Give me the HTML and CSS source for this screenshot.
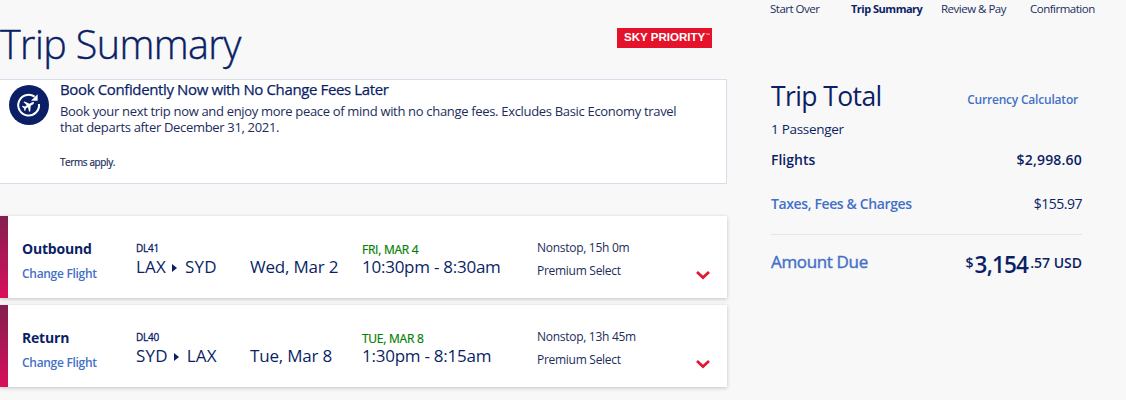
FILE: index.html
```html
<!DOCTYPE html>
<html lang="en">
<head>
    <meta charset="UTF-8">
    <title>Trip Summary</title>
    <link rel="stylesheet" href="styles.css">
</head>
<body>
    <div class="page">
        <main class="trip">
            <div class="trip-header">
                <h1 class="trip-title">Trip Summary</h1>
                <div class="sky-priority"><div class="sky-label"><span class="sky-text">SKY PRIORITY</span><span class="tm">™</span></div></div>
            </div>

            <div class="banner">
                <svg class="banner-icon" width="40" height="40" viewBox="0 0 40 40">
                    <circle cx="20" cy="20" r="20" fill="#0b1f66"/>
                    <path d="M25.6 11.6A10.4 10.4 0 1 0 30 19" fill="none" stroke="#fff" stroke-width="2"/>
                    <path d="M28.6 9.2V15.8H22Z" fill="#fff"/>
                    <g transform="translate(19.6 20.6) rotate(60) scale(.88)">
                        <path d="M0-7C1-7 1.3-5.8 1.3-4.8V-2L6.4 1.6V3.1L1.3 1.5V4.4L3 5.8V7L0 6.2L-3 7V5.8L-1.3 4.4V1.5L-6.4 3.1V1.6L-1.3-2V-4.8C-1.3-5.8-1-7 0-7Z" fill="#fff"/>
                    </g>
                </svg>
                <div class="banner-text">
                    <h2 class="banner-title">Book Confidently Now with No Change Fees Later</h2>
                    <p class="banner-copy">Book your next trip now and enjoy more peace of mind with no change fees. Excludes Basic Economy travel<br>that departs after December 31, 2021.</p>
                    <p class="banner-terms">Terms apply.</p>
                </div>
            </div>

            <div class="flights">
                <div class="flight">
                    <div class="flight-leg">
                        <div class="leg-name">Outbound</div>
                        <a class="leg-change">Change Flight</a>
                    </div>
                    <div class="flight-route">
                        <div class="flight-number">DL41</div>
                        <div class="route"><span>LAX</span><i class="route-arrow"></i><span>SYD</span></div>
                    </div>
                    <div class="flight-date">Wed, Mar 2</div>
                    <div class="flight-time">
                        <div class="arrive-date">FRI, MAR 4</div>
                        <div class="times">10:30pm - 8:30am</div>
                    </div>
                    <div class="flight-info">
                        <div class="stops">Nonstop, 15h 0m</div>
                        <div class="cabin">Premium Select</div>
                    </div>
                    <svg class="chevron" width="14" height="9" viewBox="0 0 14 9"><path d="M1 1L7 6.6L13 1" fill="none" stroke="#e01933" stroke-width="2.7"/></svg>
                </div>

                <div class="flight">
                    <div class="flight-leg">
                        <div class="leg-name">Return</div>
                        <a class="leg-change">Change Flight</a>
                    </div>
                    <div class="flight-route">
                        <div class="flight-number">DL40</div>
                        <div class="route"><span>SYD</span><i class="route-arrow"></i><span>LAX</span></div>
                    </div>
                    <div class="flight-date">Tue, Mar 8</div>
                    <div class="flight-time">
                        <div class="arrive-date">TUE, MAR 8</div>
                        <div class="times">1:30pm - 8:15am</div>
                    </div>
                    <div class="flight-info">
                        <div class="stops">Nonstop, 13h 45m</div>
                        <div class="cabin">Premium Select</div>
                    </div>
                    <svg class="chevron" width="14" height="9" viewBox="0 0 14 9"><path d="M1 1L7 6.6L13 1" fill="none" stroke="#e01933" stroke-width="2.7"/></svg>
                </div>
            </div>
        </main>

        <aside class="sidebar">
            <nav class="steps">
                <a class="step">Start Over</a>
                <a class="step active">Trip Summary</a>
                <a class="step">Review &amp; Pay</a>
                <a class="step">Confirmation</a>
            </nav>

            <div class="total">
                <div class="total-header">
                    <h2 class="total-title">Trip Total</h2>
                    <a class="currency">Currency Calculator</a>
                </div>
                <div class="passengers">1 Passenger</div>
                <div class="total-row flights-row">
                    <span>Flights</span>
                    <span class="flights-price">$2,998.60</span>
                </div>
                <div class="total-row taxes-row">
                    <a class="taxes-link">Taxes, Fees &amp; Charges</a>
                    <span class="taxes-price">$155.97</span>
                </div>
                <div class="amount-row">
                    <span class="amount-label">Amount Due</span>
                    <span class="amount"><span class="sign">$</span><span class="whole">3,154</span><span class="cents">.57 USD</span></span>
                </div>
            </div>
        </aside>
    </div>
</body>
</html>
```

FILE: styles.css
```css
* {
    margin: 0;
    padding: 0;
    box-sizing: border-box;
}

body {
    font-family: 'Open Sans', 'Noto Sans', sans-serif;
    background-color: #f8f8f8;
    color: #0b1f66;
    overflow: hidden;
}

.page {
    display: flex;
    height: 400px;
    white-space: nowrap;
}

.trip {
    width: 727px;
    flex-shrink: 0;
}

.trip-header {
    display: flex;
    justify-content: space-between;
    height: 79px;
    padding: 20px 15px 0 0;
}

.trip-title {
    font-size: 39.5px;
    font-weight: 300;
    line-height: 49px;
    letter-spacing: -0.6px;
    -webkit-text-stroke: 0.4px;
}

.sky-priority {
    width: 95px;
    height: 20px;
    margin-top: 8px;
    padding-left: 7px;
    background-color: #e4132b;
    color: white;
    font-family: 'Liberation Sans', Arial, sans-serif;
    line-height: 20px;
}

.sky-label {
    display: flex;
    width: 75px;
    transform: scaleX(1.155);
    transform-origin: left;
}

.sky-text {
    font-size: 10px;
    font-weight: bold;
}

.tm {
    font-size: 4px;
    line-height: 14px;
}

.banner {
    display: flex;
    height: 105px;
    padding-left: 9px;
    background-color: white;
    border: 1px solid #d9dcea;
    border-left: 0;
}

.banner-icon {
    margin: 5px 11px 0 0;
}

.banner-title {
    font-size: 15px;
    font-weight: 400;
    line-height: 18px;
    letter-spacing: -0.37px;
    -webkit-text-stroke: 0.25px;
}

.banner-copy {
    margin-top: 5px;
    color: #1c2d5c;
    font-size: 13px;
    line-height: 16px;
    letter-spacing: -0.32px;
}

.banner-terms {
    margin-top: 20px;
    color: #1c2d5c;
    font-size: 10px;
    line-height: 14px;
    letter-spacing: -0.4px;
    -webkit-text-stroke: 0.2px;
}

.flights {
    display: grid;
    gap: 7px;
    margin-top: 32px;
}

.flight {
    display: grid;
    grid-template-columns: 114px 114px 112px 175px 159px 14px;
    height: 82px;
    padding-left: 14px;
    border-left: 8px solid;
    border-image: linear-gradient(#821f50, #da0f5c) 1;
    background-color: white;
    box-shadow: 0 1px 4px rgba(0, 0, 0, 0.22);
}

.flight-leg {
    padding-top: 23px;
}

.leg-name {
    font-size: 14px;
    font-weight: 700;
    line-height: 20px;
    letter-spacing: -0.2px;
}

.leg-change {
    display: block;
    margin-top: 7px;
    color: #4470c6;
    font-size: 12px;
    font-weight: 600;
    line-height: 16px;
    letter-spacing: -0.3px;
}

.flight-route {
    padding-top: 26px;
}

.flight-number {
    font-size: 10px;
    line-height: 12px;
    letter-spacing: -0.2px;
    -webkit-text-stroke: 0.3px;
}

.route {
    display: flex;
    align-items: center;
    margin-top: 3px;
    font-size: 17px;
    line-height: 20px;
    letter-spacing: 0.2px;
}

.route-arrow {
    margin: 1px 8px 0 6px;
    border-left: 5px solid #0b1f66;
    border-top: 4px solid transparent;
    border-bottom: 4px solid transparent;
}

.flight-date {
    padding-top: 41px;
    font-size: 17px;
    line-height: 20px;
    letter-spacing: -0.2px;
}

.flight-time {
    padding-top: 27px;
}

.arrive-date {
    color: #008000;
    font-size: 12px;
    line-height: 14px;
    letter-spacing: -0.25px;
    -webkit-text-stroke: 0.2px;
}

.times {
    font-size: 17px;
    line-height: 20px;
    letter-spacing: -0.25px;
}

.flight-info {
    padding-top: 24px;
    color: #1c2d5c;
    font-size: 12px;
    line-height: 16px;
    letter-spacing: -0.28px;
}

.cabin {
    margin-top: 7px;
}

.chevron {
    margin-top: 55px;
}

.sidebar {
    width: 325px;
    margin-left: 43px;
}

.steps {
    display: grid;
    grid-template-columns: 81px 90px 89px auto;
    color: #1c2d5c;
    font-size: 11.5px;
    line-height: 18px;
    letter-spacing: -0.5px;
}

.step.active {
    color: #0b1f66;
    font-size: 11px;
    font-weight: 700;
    letter-spacing: -0.5px;
}

.total {
    width: 312px;
    padding: 62px 0 0 1px;
}

.total-header {
    display: flex;
    justify-content: space-between;
    padding-right: 4px;
}

.total-title {
    font-size: 26.5px;
    font-weight: 400;
    line-height: 32px;
    letter-spacing: -0.6px;
}

.currency {
    margin-top: 12px;
    color: #4470c6;
    font-size: 12px;
    font-weight: 600;
    line-height: 16px;
    letter-spacing: -0.2px;
}

.passengers {
    margin-top: 7px;
    font-size: 13.5px;
    line-height: 20px;
    letter-spacing: -0.3px;
}

.total-row {
    display: flex;
    justify-content: space-between;
    font-size: 14px;
    line-height: 20px;
}

.flights-row {
    margin-top: 11px;
    font-weight: 600;
}

.flights-price {
    letter-spacing: 0.2px;
}

.taxes-row {
    margin-top: 24px;
}

.taxes-link {
    color: #4470c6;
    font-weight: 600;
    letter-spacing: -0.38px;
}

.taxes-price {
    letter-spacing: -0.5px;
}

.amount-row {
    display: flex;
    justify-content: space-between;
    margin-top: 20px;
    padding-top: 14px;
    border-top: 1px solid #dfe6f0;
}

.amount-label {
    color: #4470c6;
    font-size: 17px;
    line-height: 26px;
    letter-spacing: -0.35px;
    -webkit-text-stroke: 0.4px;
}

.amount {
    display: flex;
    font-weight: 600;
}

.sign {
    margin-right: 1px;
    font-size: 14px;
    line-height: 27px;
}

.whole {
    font-size: 22.5px;
    line-height: 32px;
    letter-spacing: -0.8px;
}

.cents {
    margin-left: 2px;
    font-size: 14px;
    line-height: 27px;
}
```
